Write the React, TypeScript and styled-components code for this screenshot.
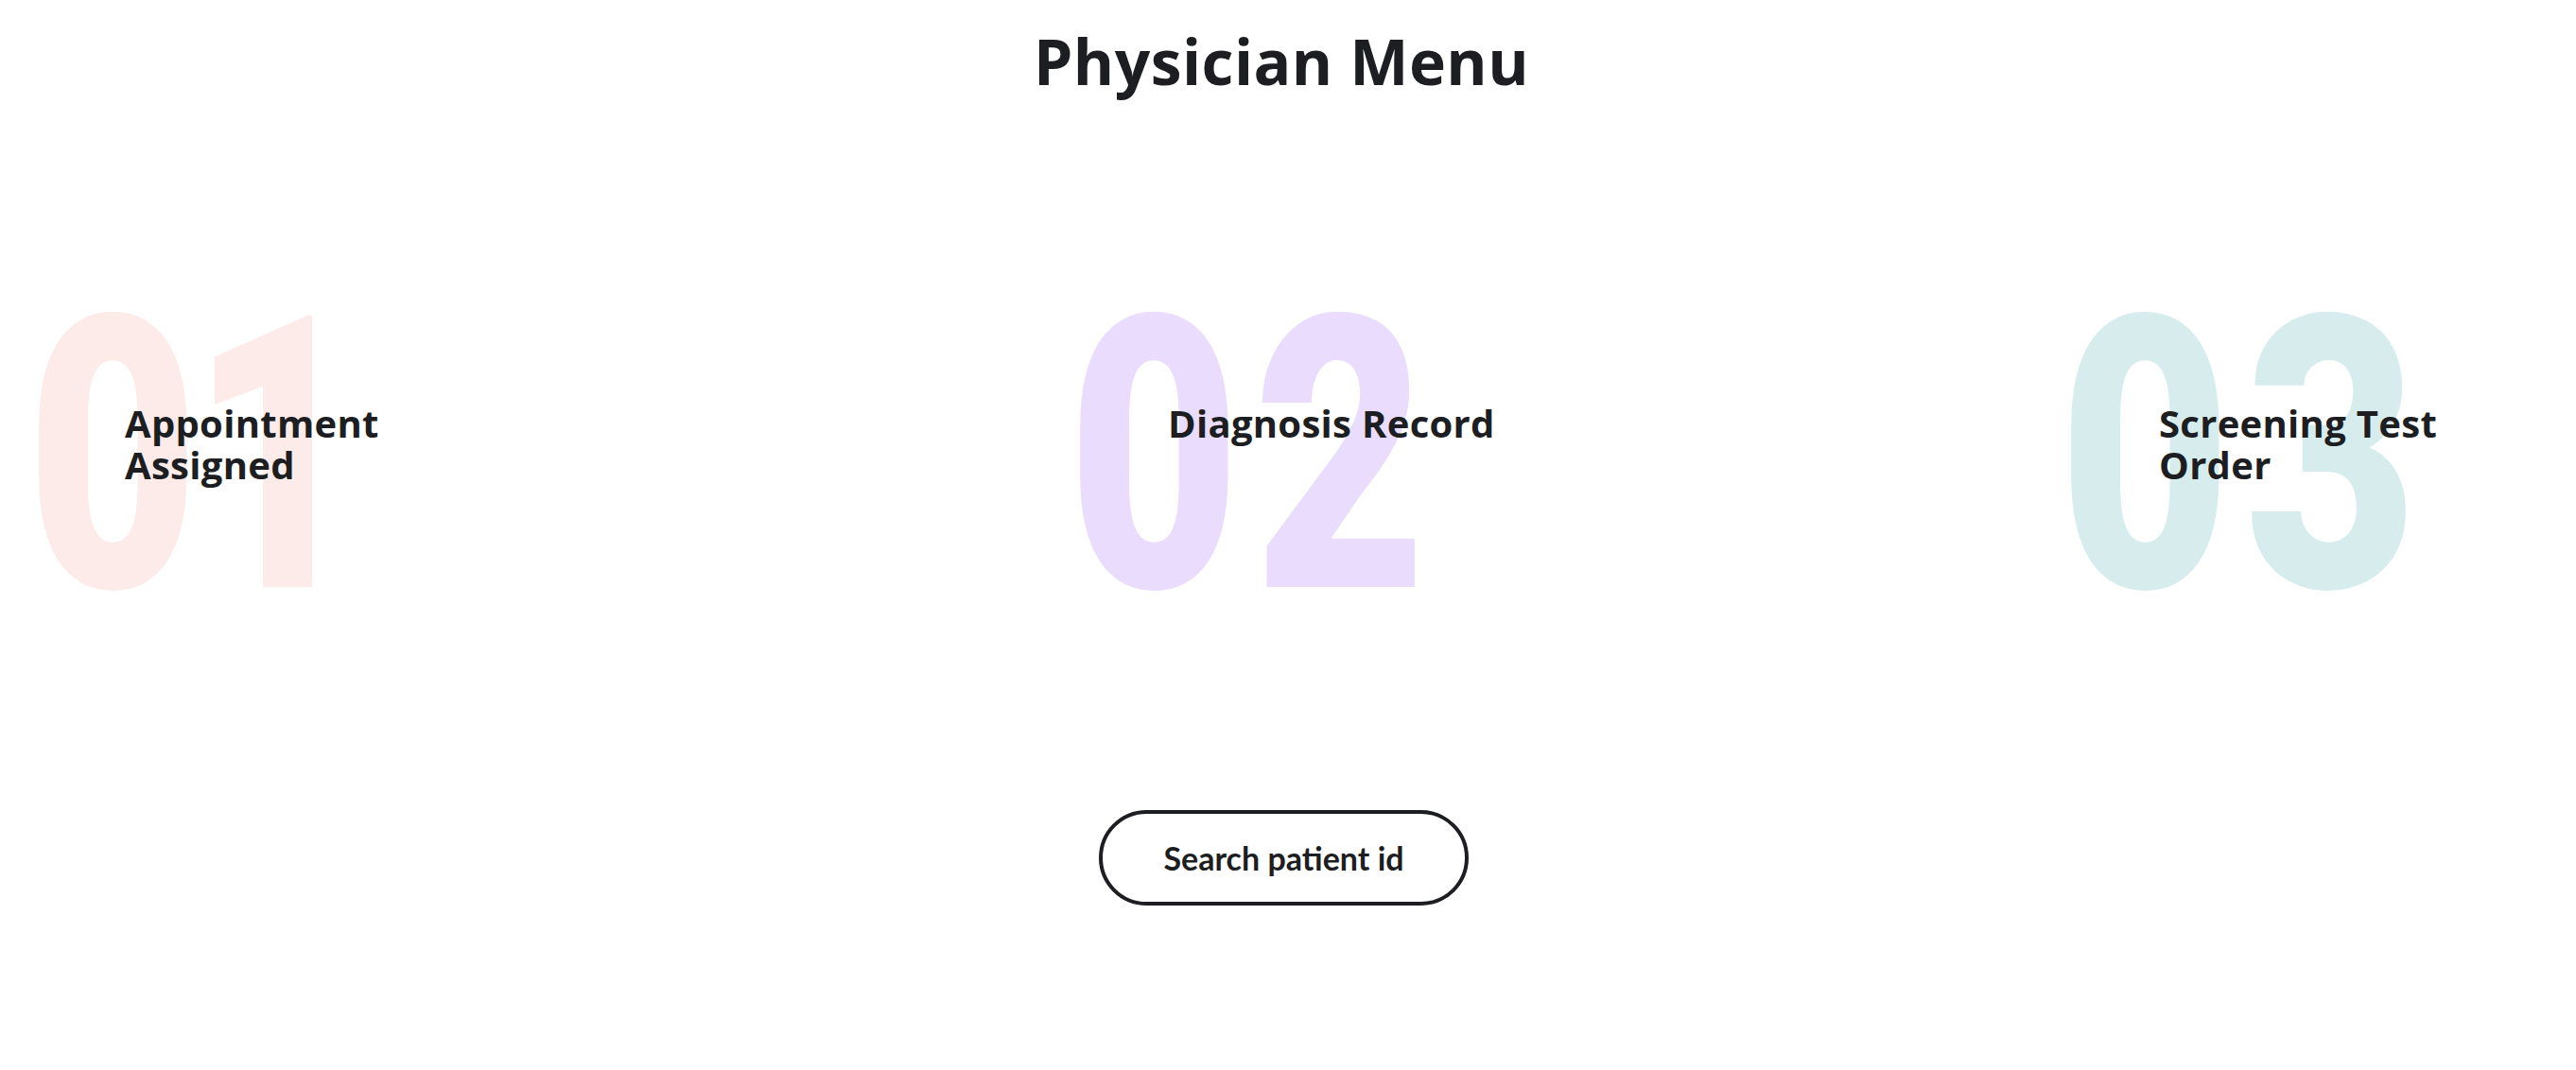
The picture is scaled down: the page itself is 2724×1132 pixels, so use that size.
import React from "react";
import styled, { createGlobalStyle } from "styled-components";

const Global = createGlobalStyle`
  html, body { margin: 0; padding: 0; background: #ffffff; }
  body { font-family: "Open Sans", "Liberation Sans", sans-serif; color: #1d1e22; }
`;

const Page = styled.main`
  display: flex;
  flex-direction: column;
  width: 2724px;
  min-height: 1132px;
`;

const Title = styled.h1`
  margin: 0;
  padding: 24px 14px 0 0;
  text-align: center;
  font-family: "Open Sans", "Liberation Sans", sans-serif;
  font-weight: 700;
  font-size: 66px;
  line-height: 80px;
  letter-spacing: 0.45px;
  color: #1d1e22;
`;

const Row = styled.section`
  display: grid;
  grid-template-columns: 1101px 1048px 1fr;
  padding-left: 38px;
  margin-top: 177px;
`;

const Item = styled.div`
  display: grid;
  align-items: start;
  justify-items: start;
`;

const Number = styled.span<{ $color: string; $spacing: number }>`
  grid-area: 1 / 1;
  margin-left: -10px;
  font-family: Roboto, "Liberation Sans", sans-serif;
  font-weight: 900;
  font-size: 404px;
  line-height: 1;
  letter-spacing: ${(p) => p.$spacing}px;
  color: ${(p) => p.$color};
  transform: scaleX(0.78);
  transform-origin: left top;
  user-select: none;
`;

const Label = styled.h2<{ $offset: number }>`
  grid-area: 1 / 1;
  position: relative;
  z-index: 1;
  margin: 145px 0 0 ${(p) => p.$offset}px;
  max-width: 370px;
  font-family: "Open Sans", "Liberation Sans", sans-serif;
  font-weight: 700;
  font-size: 40px;
  line-height: 44px;
  letter-spacing: 0.3px;
  color: #1d1e22;
`;

const ButtonRow = styled.div`
  display: flex;
  justify-content: center;
  margin-top: 172px;
  padding-right: 9px;
`;

const SearchButton = styled.button`
  width: 391px;
  height: 101px;
  box-sizing: border-box;
  border: 4px solid #1d1e22;
  border-radius: 51px;
  background: #ffffff;
  font-family: Lato, "Open Sans", sans-serif;
  font-weight: 700;
  font-size: 34px;
  color: #1d1e22;
  cursor: pointer;
`;

const items = [
  { n: "01", color: "#fcebe9", label: "Appointment Assigned", offset: 94, spacing: -12 },
  { n: "02", color: "#e9dcfd", label: "Diagnosis Record", offset: 96, spacing: 18 },
  { n: "03", color: "#d7ecec", label: "Screening Test Order", offset: 96, spacing: 18 },
];

export default function App() {
  return (
    <>
      <Global />
      <Page>
        <Title>Physician Menu</Title>
        <Row>
          {items.map((it) => (
            <Item key={it.n}>
              <Number $color={it.color} $spacing={it.spacing}>
                {it.n}
              </Number>
              <Label $offset={it.offset}>{it.label}</Label>
            </Item>
          ))}
        </Row>
        <ButtonRow>
          <SearchButton>Search patient id</SearchButton>
        </ButtonRow>
      </Page>
    </>
  );
}
